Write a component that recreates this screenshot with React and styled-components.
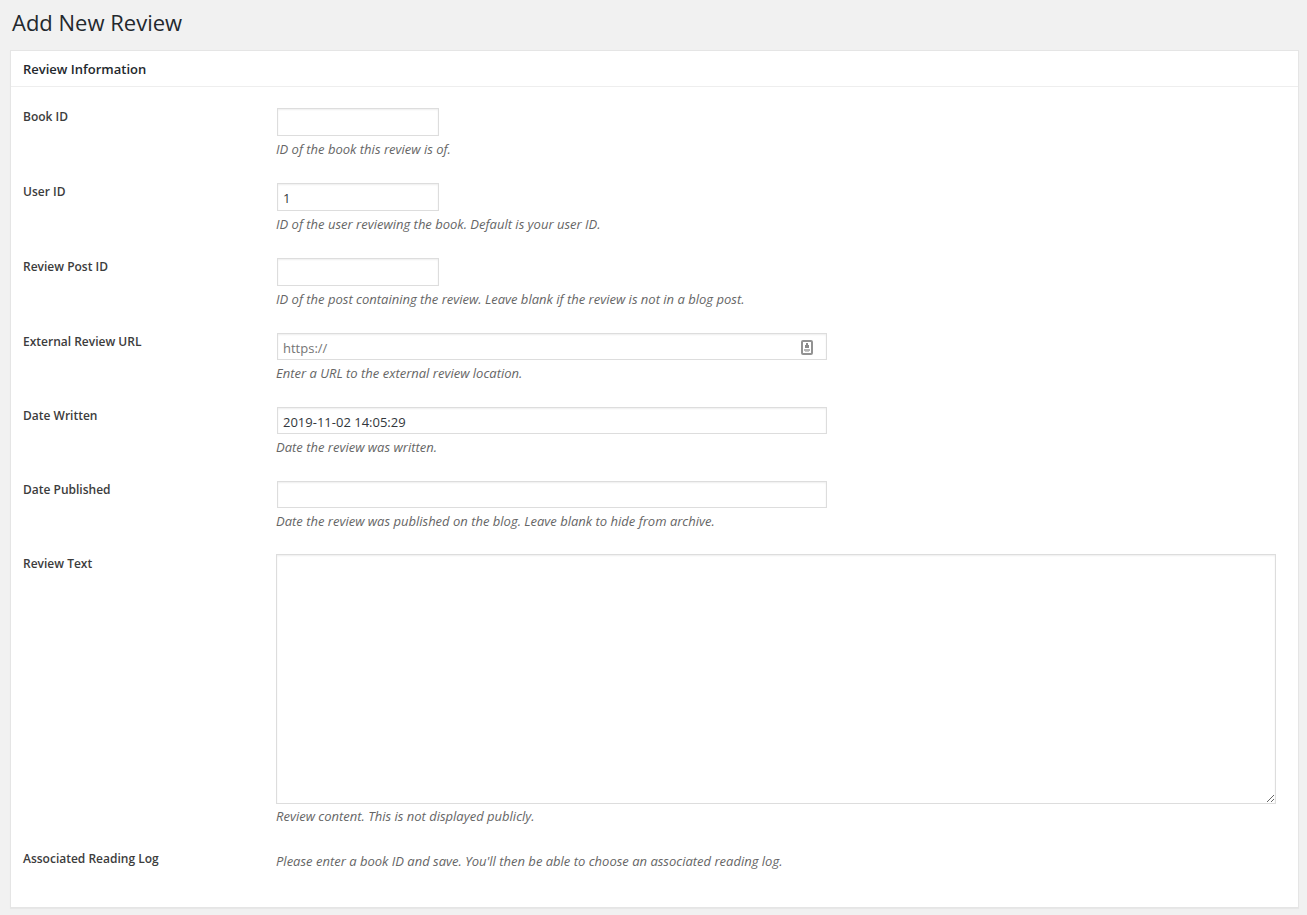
import styled, { createGlobalStyle } from "styled-components";

const App = () => {
  return (
    <Page>
      <GlobalStyle />
      <Title>Add New Review</Title>
      <PostBox>
        <BoxTitle>Review Information</BoxTitle>
        <Form>
          <Row>
            <Label htmlFor="book_id">Book ID</Label>
            <Field>
              <NumberInput id="book_id" type="number" />
              <Description>ID of the book this review is of.</Description>
            </Field>
          </Row>
          <Row>
            <Label htmlFor="user_id">User ID</Label>
            <Field>
              <NumberInput id="user_id" type="number" defaultValue="1" />
              <Description>
                ID of the user reviewing the book. Default is your user ID.
              </Description>
            </Field>
          </Row>
          <Row>
            <Label htmlFor="post_id">Review Post ID</Label>
            <Field>
              <NumberInput id="post_id" type="number" />
              <Description>
                ID of the post containing the review. Leave blank if the review
                is not in a blog post.
              </Description>
            </Field>
          </Row>
          <Row>
            <Label htmlFor="url">External Review URL</Label>
            <Field>
              <UrlBox>
                <TextInput id="url" type="url" placeholder="https://" />
                <AutofillIcon />
              </UrlBox>
              <Description>
                Enter a URL to the external review location.
              </Description>
            </Field>
          </Row>
          <Row>
            <Label htmlFor="date_written">Date Written</Label>
            <Field>
              <TextInput
                id="date_written"
                type="text"
                defaultValue="2019-11-02 14:05:29"
              />
              <Description>Date the review was written.</Description>
            </Field>
          </Row>
          <Row>
            <Label htmlFor="date_published">Date Published</Label>
            <Field>
              <TextInput id="date_published" type="text" />
              <Description>
                Date the review was published on the blog. Leave blank to hide
                from archive.
              </Description>
            </Field>
          </Row>
          <Row>
            <Label htmlFor="review">Review Text</Label>
            <Field>
              <TextArea id="review" />
              <Description>
                Review content. This is not displayed publicly.
              </Description>
            </Field>
          </Row>
          <Row>
            <Label as="div">Associated Reading Log</Label>
            <Field>
              <Description>
                Please enter a book ID and save. You'll then be able to choose
                an associated reading log.
              </Description>
            </Field>
          </Row>
        </Form>
      </PostBox>
    </Page>
  );
};

const AutofillIcon = () => (
  <IconSvg width="12" height="16" viewBox="0 0 12 16" aria-hidden="true">
    <rect x="1" y="1" width="10" height="13" rx="1" fill="#fff" stroke="#929292" strokeWidth="2" />
    <path d="M5 3h2v2h1v3H4V5h1z" fill="#8a8a8a" />
    <rect x="3" y="9" width="6" height="2" fill="#b5b5b5" />
    <rect x="4" y="11" width="4" height="1" fill="#c9c9c9" />
  </IconSvg>
);

const GlobalStyle = createGlobalStyle`
  * {
    box-sizing: border-box;
  }
  body {
    margin: 0;
    background-color: #f1f1f1;
    color: #444;
    font-family: "Open Sans", "Noto Sans", sans-serif;
    font-size: 13px;
  }
`;

const Page = styled.div`
  padding: 7px 8px 7px 10px;
`;

const Title = styled.h1`
  margin: 0 0 13px;
  padding: 0 2px;
  color: #23282d;
  font-size: 22px;
  font-weight: 400;
  line-height: 30px;
`;

const PostBox = styled.div`
  background-color: #fff;
  border: 1px solid #e5e5e5;
  box-shadow: 0 1px 1px rgba(0, 0, 0, 0.04);
`;

const BoxTitle = styled.h2`
  margin: 0;
  padding: 9px 12px 7px;
  border-bottom: 1px solid #eee;
  color: #23282d;
  font-size: 13px;
  font-weight: 600;
  line-height: 19px;
`;

const Form = styled.form`
  padding: 5px 12px 28px;
`;

const Row = styled.div`
  display: grid;
  grid-template-columns: 243px 1fr;
`;

const Label = styled.label`
  padding: 16px 10px 0 0;
  color: #3c3c3c;
  font-size: 12px;
  font-weight: 600;
  line-height: 18px;
`;

const Field = styled.div`
  display: flex;
  flex-direction: column;
  align-items: flex-start;
  padding: 15px 10px 9px;
`;

const Description = styled.p`
  margin: 3px 0 0;
  color: #666;
  font-size: 13px;
  font-style: italic;
  line-height: 18px;
`;

const Input = styled.input`
  margin: 1px;
  padding: 4px 5px 2px;
  border: 1px solid #ddd;
  border-radius: 0;
  box-shadow: inset 0 1px 2px rgba(0, 0, 0, 0.07);
  background-color: #fff;
  color: #32373c;
  font-family: inherit;
  font-size: 13px;

  &::placeholder {
    color: #757575;
  }
  &:focus {
    border-color: #5b9dd9;
    outline: none;
  }
`;

const NumberInput = styled(Input)`
  width: 162px;
  height: 28px;
`;

const TextInput = styled(Input)`
  width: 550px;
  max-width: 100%;
  height: 27px;
`;

const UrlBox = styled.div`
  position: relative;
  display: flex;
  max-width: 100%;
`;

const IconSvg = styled.svg`
  position: absolute;
  top: 8px;
  right: 15px;
`;

const TextArea = styled.textarea`
  display: block;
  width: 100%;
  height: 250px;
  padding: 2px 6px;
  border: 1px solid #ddd;
  box-shadow: inset 0 1px 2px rgba(0, 0, 0, 0.07);
  color: #32373c;
  font-family: inherit;
  font-size: 13px;
  resize: vertical;
`;

export default App;
